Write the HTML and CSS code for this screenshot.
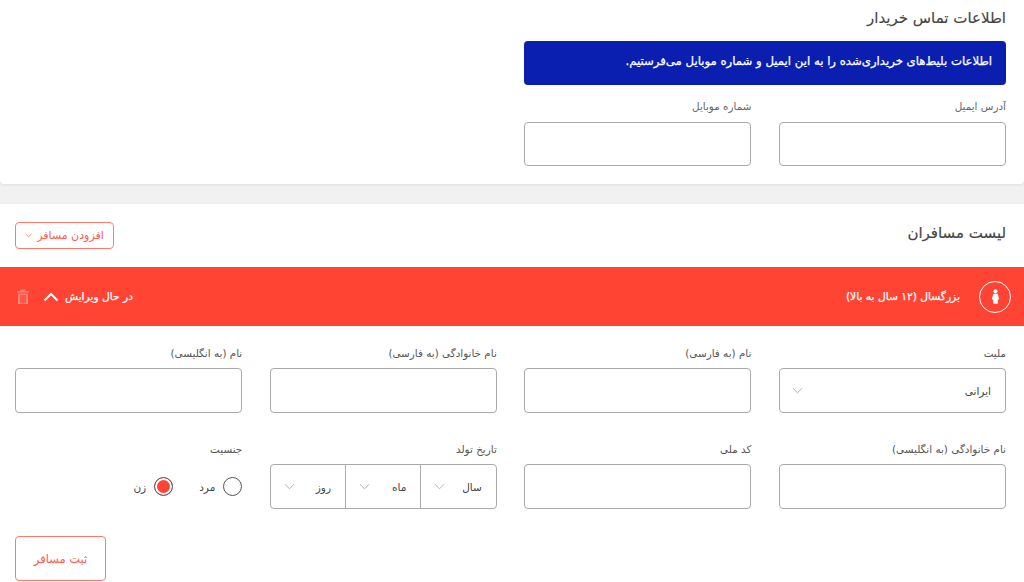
FILE: index.html
```html
<!DOCTYPE html>
<html lang="fa" dir="rtl">
<head>
  <meta charset="utf-8">
  <title>اطلاعات تماس خریدار</title>
  <link rel="stylesheet" href="styles.css">
</head>
<body>
  <section class="card contact">
    <h2 class="contact-title">اطلاعات تماس خریدار</h2>
    <div class="form-grid">
      <div class="notice">اطلاعات بلیط‌های خریداری‌شده را به این ایمیل و شماره موبایل می‌فرستیم.</div>
      <div class="field">
        <label>آدرس ایمیل</label>
        <div class="box"></div>
      </div>
      <div class="field">
        <label>شماره موبایل</label>
        <div class="box"></div>
      </div>
    </div>
  </section>

  <section class="card passengers">
    <div class="list-head">
      <h2>لیست مسافران</h2>
      <button class="add-btn">افزودن مسافر
        <svg class="chev-sm" viewBox="0 0 10 6"><path d="M1 1l4 4 4-4"/></svg>
      </button>
    </div>

    <div class="red-bar">
      <div class="bar-side">
        <span class="person">
          <svg viewBox="0 0 10 16"><circle cx="5" cy="2.200" r="2.200"/><path d="M2.500 5h5l1.500 6-1.500.5V16h-5v-4.500L1 11z"/></svg>
        </span>
        <span class="bar-title">بزرگسال (۱۲ سال به بالا)</span>
      </div>
      <div class="bar-side">
        <span class="bar-state">در حال ویرایش</span>
        <svg class="chev-up" viewBox="0 0 16 10"><path d="M1.500 8.500L8 2l6.500 6.500"/></svg>
        <svg class="trash" viewBox="0 0 12 15"><path d="M0 2h3.500V.5h5V2H12v1.500H0zM1 4.500h10V15H1zM3.200 6v7.500h1.400V6zm2.100 0v7.500h1.400V6zm2.100 0v7.500h1.400V6z" fill-rule="evenodd"/></svg>
      </div>
    </div>

    <div class="form-grid details">
      <div class="field">
        <label>ملیت</label>
        <div class="box select">
          <span>ایرانی</span>
          <svg class="chev" viewBox="0 0 12 7"><path d="M1 1l5 5 5-5"/></svg>
        </div>
      </div>
      <div class="field">
        <label>نام (به فارسی)</label>
        <div class="box"></div>
      </div>
      <div class="field">
        <label>نام خانوادگی (به فارسی)</label>
        <div class="box"></div>
      </div>
      <div class="field">
        <label>نام (به انگلیسی)</label>
        <div class="box"></div>
      </div>
      <div class="field">
        <label>نام خانوادگی (به انگلیسی)</label>
        <div class="box"></div>
      </div>
      <div class="field">
        <label>کد ملی</label>
        <div class="box"></div>
      </div>
      <div class="field">
        <label>تاریخ تولد</label>
        <div class="box date">
          <div class="date-part"><span>سال</span><svg class="chev" viewBox="0 0 12 7"><path d="M1 1l5 5 5-5"/></svg></div>
          <div class="date-part"><span>ماه</span><svg class="chev" viewBox="0 0 12 7"><path d="M1 1l5 5 5-5"/></svg></div>
          <div class="date-part"><span>روز</span><svg class="chev" viewBox="0 0 12 7"><path d="M1 1l5 5 5-5"/></svg></div>
        </div>
      </div>
      <div class="field">
        <label>جنسیت</label>
        <div class="gender">
          <div class="radio-item"><span class="radio"></span><span>مرد</span></div>
          <div class="radio-item"><span class="radio checked"></span><span>زن</span></div>
        </div>
      </div>
    </div>

    <button class="save-btn">ثبت مسافر</button>
  </section>
</body>
</html>
```

FILE: styles.css
```css
body {
  font-family: "DejaVu Sans", "Noto Sans", sans-serif;
  background: #f1f1f1;
  margin: 0;
  height: 582px;
  overflow: hidden;
  color: #444;
}
.card {
  background: white;
  box-shadow: 0 1px 3px rgba(0,0,0,0.08);
}
.contact {
  height: 184px;
  padding: 0 18px 0 15px;
  border-bottom-left-radius: 4px;
  border-bottom-right-radius: 4px;
  box-sizing: border-box;
}
.contact-title {
  margin: 0;
  padding-top: 7px;
  height: 41px;
  box-sizing: border-box;
  font-size: 15px;
  line-height: 22px;
  font-weight: 400;
  -webkit-text-stroke: 0.15px #444;
}
.contact .box {
  height: 44px;
}
.contact .field label {
  line-height: 14px;
}
.passengers {
  margin-top: 20px;
  height: 378px;
}
.form-grid {
  display: grid;
  grid-template-columns: repeat(4, 1fr);
  column-gap: 27.330px;
}
.notice {
  grid-column: span 2;
  height: 44px;
  line-height: 41px;
  margin-bottom: 14px;
  padding-right: 14px;
  background: #0a1eb0;
  color: white;
  border-radius: 4px;
  font-size: 11.700px;
  -webkit-text-stroke: 0.25px white;
  white-space: nowrap;
}
.contact .field:nth-child(2) {
  grid-column: 1;
}
.field label {
  display: block;
  height: 23px;
  line-height: 15px;
  font-size: 10.400px;
  color: #666;
}
.box {
  height: 45px;
  box-sizing: border-box;
  border: 1px solid #aaa;
  border-radius: 4px;
  background: white;
}
.list-head {
  height: 63px;
  padding: 0 18px 0 10px;
  display: flex;
  align-items: center;
  justify-content: space-between;
}
.list-head h2 {
  margin: 0 0 5px;
  font-size: 15px;
  font-weight: 400;
  -webkit-text-stroke: 0.15px #444;
}
.add-btn {
  width: 99px;
  height: 27px;
  margin: 0 0 0 5px;
  padding: 0;
  border: 1px solid #ff7a6e;
  border-radius: 4px;
  background: white;
  color: #ff5a4c;
  font-family: inherit;
  font-size: 11px;
  display: flex;
  align-items: center;
  justify-content: center;
  gap: 5px;
}
.chev-sm {
  width: 7px;
  height: 5px;
  fill: none;
  stroke: #ff5a4c;
  stroke-width: 1;
}
.red-bar {
  height: 59px;
  background: #ff4433;
  color: white;
  padding: 0 13px 0 17px;
  display: flex;
  align-items: center;
  justify-content: space-between;
  font-size: 10.700px;
  -webkit-text-stroke: 0.25px white;
}
.bar-side {
  display: flex;
  align-items: center;
}
.person {
  width: 32px;
  height: 32px;
  box-sizing: border-box;
  border: 1px solid white;
  border-radius: 50%;
  display: flex;
  align-items: center;
  justify-content: center;
  margin-left: 19px;
}
.person svg {
  width: 9px;
  height: 15px;
  fill: white;
}
.chev-up {
  width: 16px;
  height: 10px;
  margin-right: 6px;
  fill: none;
  stroke: white;
  stroke-width: 2;
}
.trash {
  width: 12px;
  height: 15px;
  margin-right: 14px;
  fill: #ff8076;
}
.details {
  padding: 0 18px 0 15px;
  margin-top: 20px;
  row-gap: 29px;
}
.details .field label {
  height: 22px;
  color: #555;
}
.select {
  display: flex;
  align-items: center;
  justify-content: space-between;
  padding: 0 14px 0 12px;
  font-size: 10.500px;
}
.chev {
  width: 11px;
  height: 7px;
  fill: none;
  stroke: #aaa;
  stroke-width: 1;
}
.date {
  display: flex;
}
.date-part {
  flex: 1;
  display: flex;
  align-items: center;
  justify-content: space-between;
  padding: 0 14px 0 13px;
  font-size: 10.500px;
  border-left: 1px solid #aaa;
}
.date-part:last-child {
  border-left: none;
}
.gender {
  height: 45px;
  display: flex;
  align-items: center;
  gap: 26px;
  font-size: 10.500px;
}
.radio-item {
  display: flex;
  align-items: center;
  gap: 8px;
}
.radio {
  width: 19px;
  height: 19px;
  box-sizing: border-box;
  border: 1px solid #555;
  border-radius: 50%;
  background: white;
}
.radio.checked {
  border: 1.500px solid #555;
  background: #ff4433;
  box-shadow: inset 0 0 0 2px white;
}
.save-btn {
  display: block;
  width: 91px;
  height: 45px;
  margin: 27px auto 0 15px;
  border: 1px solid #ff7a6e;
  border-radius: 4px;
  background: white;
  color: #ff5a4c;
  font-family: inherit;
  font-size: 11.500px;
}
```
